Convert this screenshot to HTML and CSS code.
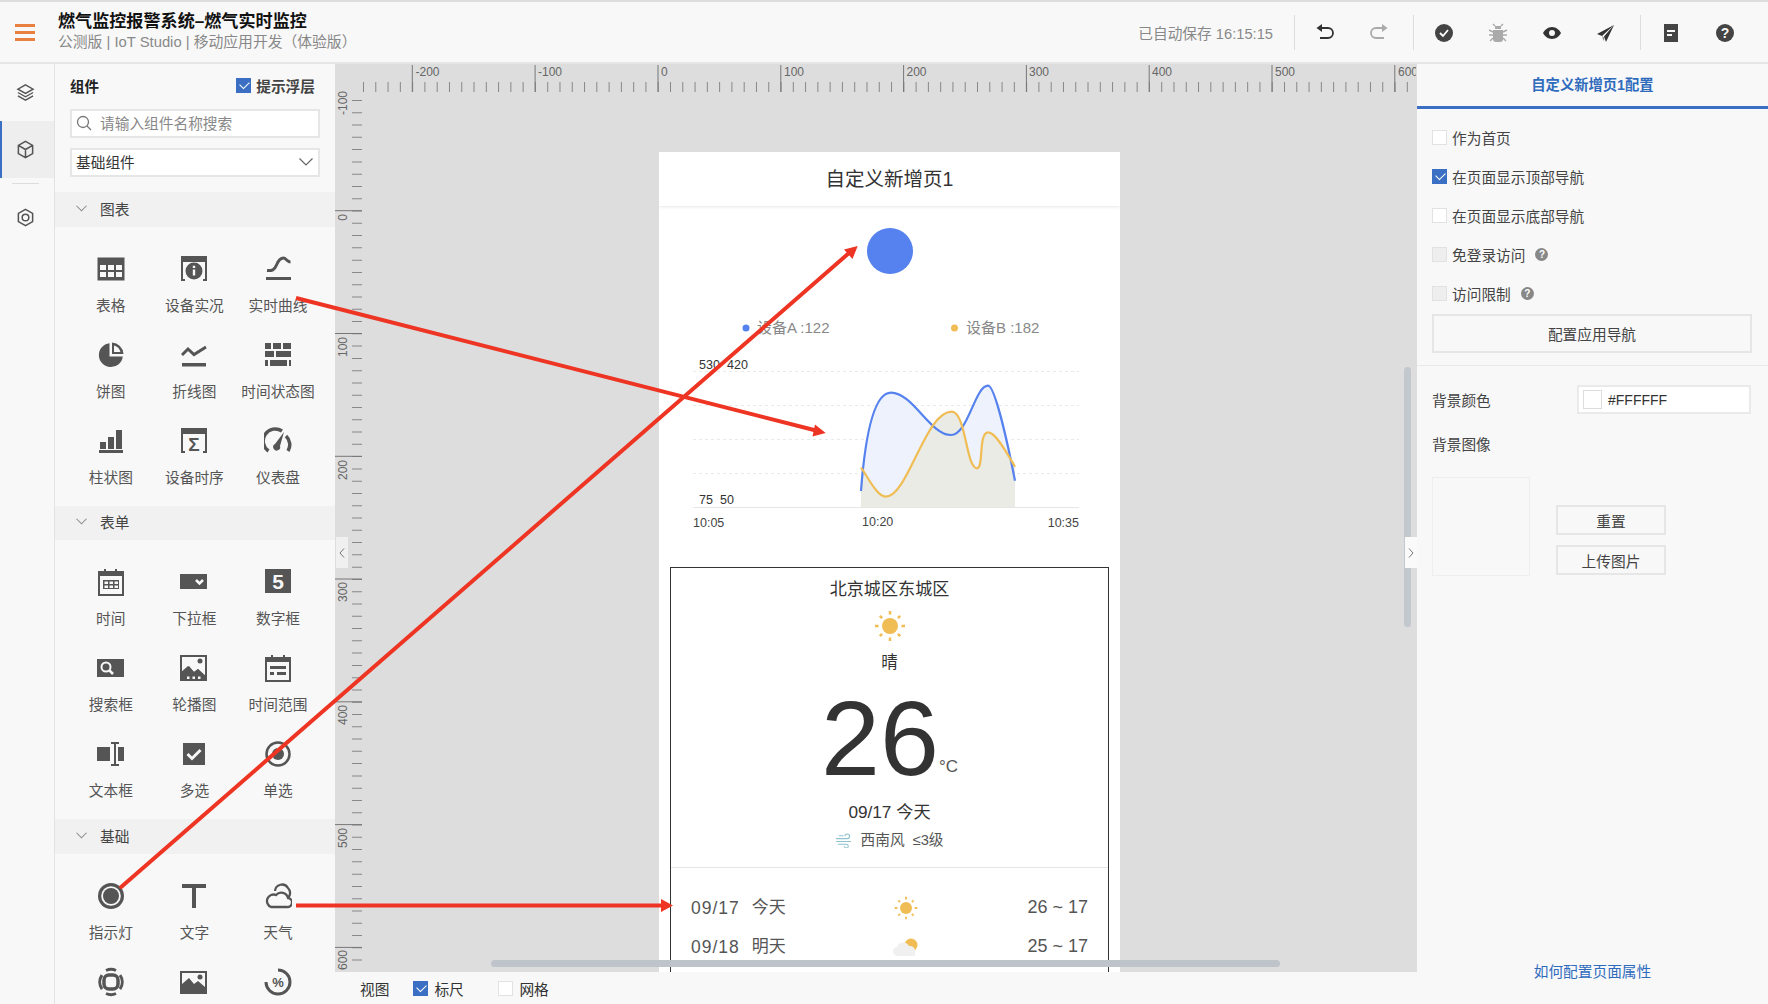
FILE: index.html
```html
<!DOCTYPE html>
<html lang="zh">
<head>
<meta charset="utf-8">
<title>燃气实时监控</title>
<link rel="stylesheet" href="styles.css">
</head>
<body>
<svg class="defs" aria-hidden="true">
  <symbol id="i-table" viewBox="0 0 28 28"><path d="M.5 2.5h27v23H.5z"/><path fill="#f8f8f8" d="M3 10h6v5H3zM11 10h6v5h-6zM19 10h6v5h-6zM3 17h6v5H3zM11 17h6v5h-6zM19 17h6v5h-6z"/></symbol>
  <symbol id="i-device" viewBox="0 0 28 28"><path d="M1 1h26v25h-4v-2h2V7H3v17h2v2H1z"/><circle cx="14" cy="16" r="8.5"/><path fill="#f8f8f8" d="M12.800 14.500h2.400v6h-2.400zM12.800 10.800h2.400v2.300h-2.400z"/></symbol>
  <symbol id="i-curve" viewBox="0 0 28 28"><path d="M2 22h25v3H2z"/><path fill="none" stroke="currentColor" stroke-width="3" d="M3 15.500C8 16 10.500 15 12.500 10 14.500 5 17 3 19.500 3 22 3 23 7 26.500 7"/></symbol>
  <symbol id="i-pie" viewBox="0 0 28 28"><path d="M12.500 2.200A12 12 0 1 0 25.800 15.500H12.500z"/><path d="M15 1.500A12.500 12.500 0 0 1 26.500 13H15z"/><path fill="#f8f8f8" d="M17 4.500A9 9 0 0 1 23.500 11H17z"/></symbol>
  <symbol id="i-line" viewBox="0 0 28 28"><path d="M2 22h24v3.500H2z"/><path fill="none" stroke="currentColor" stroke-width="3" d="M2 14l6-6 6 5.500L26 6"/></symbol>
  <symbol id="i-status" viewBox="0 0 28 28"><path d="M1 2h6v6H1zM9 2h8v6H9zM19 2h8v6h-8zM1 10h9v6H1zM12 10h15v6H12zM1 19h3v6H1zM6 19h17v6H6zM25 19h2v6h-2z"/></symbol>
  <symbol id="i-bar" viewBox="0 0 28 28"><path d="M2 23h24v3H2zM3 15h6v7H3zM11 10h6v12h-6zM19 3h6v19h-6z"/></symbol>
  <symbol id="i-seq" viewBox="0 0 28 28"><path d="M1 1h26v25h-4v-2h2V7H3v17h2v2H1z"/></symbol>
  <symbol id="i-gauge" viewBox="0 0 28 28"><path fill="none" stroke="currentColor" stroke-width="3.500" d="M4.500 24A12 12 0 0 1 18 4M22 9a12 12 0 0 1 2 15"/><path d="M11 17l9-12-4 14a3.500 3.500 0 1 1-5-2z"/></symbol>
  <symbol id="i-cal" viewBox="0 0 28 28"><path d="M7 1h2v3H7zM18 1h2v3h-2zM1 3h26v25H1z"/><path fill="#f8f8f8" d="M3 8h22v18H3z"/><path d="M1 6h26v2H1zM6 12h16v9H6z"/><path fill="#f8f8f8" d="M7.500 13.500h3.500v2.500H7.500zM12.500 13.500h3.500v2.500h-3.500zM17.500 13.500h3.500v2.500h-3.500zM7.500 17.500h3.500V20H7.500zM12.500 17.500h3.500V20h-3.500zM17.500 17.500h3.500V20h-3.500z"/></symbol>
  <symbol id="i-drop" viewBox="0 0 28 28"><path d="M0 6h27v15H0z"/><path fill="none" stroke="#f8f8f8" stroke-width="2.500" d="M16 12l3.500 3.500L23 12"/></symbol>
  <symbol id="i-num" viewBox="0 0 28 28"><path d="M1 1h26v24H1z"/></symbol>
  <symbol id="i-search" viewBox="0 0 28 28"><path d="M0 5h27v18H0z"/><circle cx="9" cy="13" r="4.500" fill="none" stroke="#f8f8f8" stroke-width="2"/><path stroke="#f8f8f8" stroke-width="2.500" d="M12 16l4 4"/></symbol>
  <symbol id="i-carousel" viewBox="0 0 28 28"><path d="M0 1h27v26H0z"/><path fill="#f8f8f8" d="M2 3h23v19l-7-7-4 3-5-6-7 7z"/><circle cx="20" cy="7" r="2.500"/><path d="M0 19l8-7 6 6 4-3 9 8v4H0z"/><path fill="#f8f8f8" d="M7 22.500h2.500V25H7zM12.500 22.500H15V25h-2.500zM18 22.500h2.500V25H18z"/></symbol>
  <symbol id="i-range" viewBox="0 0 28 28"><path d="M7 1h2v3H7zM19 1h2v3h-2zM1 3h26v25H1z"/><path fill="#f8f8f8" d="M3 8h22v18H3z"/><path d="M6 12h16v3H6zM6 18h4v3H6zM13 18h9v3h-9z"/></symbol>
  <symbol id="i-input" viewBox="0 0 28 28"><path d="M0 7h13v14H0zM21 7h6v14h-6zM14 2h8v2h-3v20h3v2h-8v-2h3V4h-3z"/></symbol>
  <symbol id="i-check" viewBox="0 0 28 28"><path d="M3 3h22v22H3z"/><path fill="none" stroke="#f8f8f8" stroke-width="3" d="M7.500 14l4.500 4.500 8.500-8.500"/></symbol>
  <symbol id="i-radio" viewBox="0 0 28 28"><circle cx="14" cy="14" r="11.500" fill="none" stroke="currentColor" stroke-width="2.500"/><circle cx="14" cy="14" r="6"/></symbol>
  <symbol id="i-lamp" viewBox="0 0 28 28"><circle cx="14" cy="14" r="13"/><circle cx="14" cy="14" r="9.800" fill="#f8f8f8"/><circle cx="14" cy="14" r="8"/></symbol>
  <symbol id="i-text" viewBox="0 0 28 28"><path d="M2 2h24v4H16v20h-4V6H2z"/></symbol>
  <symbol id="i-cloud" viewBox="0 0 28 28"><path fill="none" stroke="currentColor" stroke-width="2.300" d="M7 25h16a4.500 4.500 0 0 0 1-9 7 7 0 0 0-12-3 6 6 0 0 0-5 12zM11 9a7 7 0 0 1 13-3 7 7 0 0 1 0 10"/></symbol>
  <symbol id="i-ring" viewBox="0 0 28 28"><path fill="none" stroke="currentColor" stroke-width="3" d="M5 7A12 12 0 0 0 5 21M9 25.500a12 12 0 0 0 10 0M23 21A12 12 0 0 0 23 7M19 2.500a12 12 0 0 0-10 0"/><rect x="7" y="7" width="14" height="14" rx="5" fill="none" stroke="currentColor" stroke-width="3.500"/></symbol>
  <symbol id="i-image" viewBox="0 0 28 28"><path d="M0 3h27v23H0z"/><path fill="#f8f8f8" d="M2 5h23v14l-7-6-4 3-5-6-7 6z"/><circle cx="20" cy="9" r="2.500"/></symbol>
  <symbol id="i-percent" viewBox="0 0 28 28"><path fill="none" stroke="currentColor" stroke-width="3" d="M14 2a12 12 0 1 1-12 12"/></symbol>
  <symbol id="i-sun" viewBox="0 0 32 32"><circle cx="16" cy="16" r="8"/><path fill="none" stroke="currentColor" stroke-width="2.500" d="M16 1v3.500M16 27.500V31M1 16h3.500M27.500 16H31M5.800 5.800l2.300 2.300M23.900 23.900l2.300 2.300M5.800 26.200l2.300-2.300M23.900 8.100l2.300-2.300"/></symbol>
</svg>

<div class="app">
  <header class="topbar">
    <div class="burger"><i></i><i></i><i></i></div>
    <div class="brand">
      <div class="brand-title">燃气监控报警系统–燃气实时监控</div>
      <div class="brand-sub">公测版 | IoT Studio | 移动应用开发（体验版）</div>
    </div>
    <div class="tools">
      <span class="saved">已自动保存 16:15:15</span>
      <span class="sep"></span>
      <span class="tool"><svg viewBox="0 0 20 20" width="20" height="20"><path fill="none" stroke="#333" stroke-width="1.800" d="M6 5h7a5 5 0 0 1 0 10H5"/><path fill="#333" d="M7 1v8L1.500 5z"/></svg></span>
      <span class="tool"><svg viewBox="0 0 20 20" width="20" height="20"><path fill="none" stroke="#aaa" stroke-width="1.800" d="M14 5H7a5 5 0 0 0 0 10h8"/><path fill="#aaa" d="M13 1v8l5.500-4z"/></svg></span>
      <span class="sep"></span>
      <span class="tool"><svg viewBox="0 0 20 20" width="20" height="20"><circle cx="10" cy="10" r="9" fill="#444"/><path fill="none" stroke="#fff" stroke-width="1.800" d="M6 10l3 3 5-6"/></svg></span>
      <span class="tool"><svg viewBox="0 0 20 20" width="20" height="20"><path fill="#aaa" d="M7 3h6v3H7zM5 7h10v10a3 3 0 0 1-3 2H8a3 3 0 0 1-3-2z"/><path fill="none" stroke="#aaa" stroke-width="1.400" d="M1 7l4 2M19 7l-4 2M1 12h4M19 12h-4M2 18l3-3M18 18l-3-3M7 3L5 1M13 3l2-2"/></svg></span>
      <span class="tool"><svg viewBox="0 0 20 20" width="20" height="20"><path fill="#333" d="M10 4c4 0 7.500 3 9 6-1.500 3-5 6-9 6s-7.500-3-9-6c1.500-3 5-6 9-6z"/><circle cx="10" cy="10" r="3" fill="#f8f8f8"/></svg></span>
      <span class="tool"><svg viewBox="0 0 20 20" width="20" height="20"><path fill="#333" d="M18 2L1 11l5 2zM18 2L8 13.500l2 5.500z"/><path fill="#888" d="M6 13l1.500 5 1-3z"/></svg></span>
      <span class="sep"></span>
      <span class="tool"><svg viewBox="0 0 20 20" width="20" height="20"><path fill="#444" d="M3 1h14v18H3z"/><path fill="#f8f8f8" d="M6 7h8v2H6zM6 11h5v2H6z"/></svg></span>
      <span class="tool"><svg viewBox="0 0 20 20" width="20" height="20"><circle cx="10" cy="10" r="9" fill="#444"/><text x="10" y="15" text-anchor="middle" class="glyph glyph-help">?</text></svg></span>
    </div>
  </header>

  <div class="main">
    <nav class="rail">
      <div class="rail-item"><svg viewBox="0 0 20 20" width="19" height="19" fill="none" stroke="#555" stroke-width="1.500"><path d="M10 2l8 4.500-8 4.500-8-4.500zM2 10l8 4.500 8-4.500M2 13.500L10 18l8-4.500"/></svg></div>
      <div class="rail-item rail-active"><svg viewBox="0 0 20 20" width="19" height="19" fill="none" stroke="#555" stroke-width="1.600"><path d="M10 1.500l7.500 4.200v8.600L10 18.500l-7.500-4.200V5.700zM2.500 5.700l7.500 4.300 7.500-4.300M10 10v8.500"/></svg></div>
      <div class="rail-line"></div>
      <div class="rail-item"><svg viewBox="0 0 20 20" width="19" height="19" fill="none" stroke="#555" stroke-width="1.600"><path d="M10 1.500l7.500 4.200v8.600L10 18.500l-7.500-4.200V5.700z"/><circle cx="10" cy="10" r="3.500"/></svg></div>
    </nav>

    <aside class="panel">
      <div class="panel-head">
        <strong class="panel-title">组件</strong>
        <label class="hint"><span class="cb cb-on"></span>提示浮层</label>
      </div>
      <div class="search">
        <svg viewBox="0 0 16 16" width="16" height="16" fill="none" stroke="#777" stroke-width="1.300"><circle cx="7" cy="7" r="5.500"/><path d="M11 11l4 4"/></svg>
        <span>请输入组件名称搜索</span>
      </div>
      <div class="select">
        <span>基础组件</span>
        <svg viewBox="0 0 14 8" width="14" height="8" fill="none" stroke="#666" stroke-width="1.200"><path d="M0.500 0.500L7 7l6.500-6.500"/></svg>
      </div>

      <div class="sec"><svg viewBox="0 0 12 7" width="11" height="7" fill="none" stroke="#888" stroke-width="1.100"><path d="M.5.500L6 6 11.500.500"/></svg>图表</div>
      <div class="grid">
        <div class="cell"><svg class="ico"><use href="#i-table"/></svg><span>表格</span></div>
        <div class="cell"><svg class="ico"><use href="#i-device"/></svg><span>设备实况</span></div>
        <div class="cell"><svg class="ico"><use href="#i-curve"/></svg><span>实时曲线</span></div>
        <div class="cell"><svg class="ico"><use href="#i-pie"/></svg><span>饼图</span></div>
        <div class="cell"><svg class="ico"><use href="#i-line"/></svg><span>折线图</span></div>
        <div class="cell"><svg class="ico"><use href="#i-status"/></svg><span>时间状态图</span></div>
        <div class="cell"><svg class="ico"><use href="#i-bar"/></svg><span>柱状图</span></div>
        <div class="cell"><svg class="ico" viewBox="0 -2 28 32"><use href="#i-seq" width="28" height="28"/><text x="14" y="24" text-anchor="middle" class="glyph glyph-sigma">Σ</text></svg><span>设备时序</span></div>
        <div class="cell"><svg class="ico"><use href="#i-gauge"/></svg><span>仪表盘</span></div>
      </div>

      <div class="sec"><svg viewBox="0 0 12 7" width="11" height="7" fill="none" stroke="#888" stroke-width="1.100"><path d="M.5.500L6 6 11.500.500"/></svg>表单</div>
      <div class="grid">
        <div class="cell"><svg class="ico"><use href="#i-cal"/></svg><span>时间</span></div>
        <div class="cell"><svg class="ico"><use href="#i-drop"/></svg><span>下拉框</span></div>
        <div class="cell"><svg class="ico" viewBox="0 -2 28 32"><use href="#i-num" width="28" height="28"/><text x="14" y="21" text-anchor="middle" class="glyph glyph-five">5</text></svg><span>数字框</span></div>
        <div class="cell"><svg class="ico"><use href="#i-search"/></svg><span>搜索框</span></div>
        <div class="cell"><svg class="ico"><use href="#i-carousel"/></svg><span>轮播图</span></div>
        <div class="cell"><svg class="ico"><use href="#i-range"/></svg><span>时间范围</span></div>
        <div class="cell"><svg class="ico"><use href="#i-input"/></svg><span>文本框</span></div>
        <div class="cell"><svg class="ico"><use href="#i-check"/></svg><span>多选</span></div>
        <div class="cell"><svg class="ico"><use href="#i-radio"/></svg><span>单选</span></div>
      </div>

      <div class="sec"><svg viewBox="0 0 12 7" width="11" height="7" fill="none" stroke="#888" stroke-width="1.100"><path d="M.5.500L6 6 11.500.500"/></svg>基础</div>
      <div class="grid">
        <div class="cell"><svg class="ico"><use href="#i-lamp"/></svg><span>指示灯</span></div>
        <div class="cell"><svg class="ico"><use href="#i-text"/></svg><span>文字</span></div>
        <div class="cell"><svg class="ico"><use href="#i-cloud"/></svg><span>天气</span></div>
        <div class="cell"><svg class="ico"><use href="#i-ring"/></svg></div>
        <div class="cell"><svg class="ico"><use href="#i-image"/></svg></div>
        <div class="cell"><svg class="ico" viewBox="0 -2 28 32"><use href="#i-percent" width="28" height="28"/><text x="14" y="19" text-anchor="middle" class="glyph glyph-pct">%</text></svg></div>
      </div>
    </aside>

    <section class="center">
      <div class="canvas">
        <div class="phone">
          <div class="phone-head">自定义新增页1</div>
          <div class="lamp"></div>
          <svg class="chart" viewBox="659 300 461 240" width="461" height="240">
            <circle cx="746" cy="328" r="3.500" fill="#5582ee"/>
            <text x="757" y="333" class="legend">设备A :122</text>
            <circle cx="954.500" cy="328" r="3.500" fill="#f0bd55"/>
            <text x="966" y="333" class="legend">设备B :182</text>
            <text x="699" y="369" class="axis">530</text>
            <text x="727" y="369" class="axis">420</text>
            <text x="699" y="504" class="axis">75</text>
            <text x="720" y="504" class="axis">50</text>
            <g class="gridline">
              <path d="M693 371.500H1079M693 405.500H1079M693 439.500H1079M693 473.500H1079"/>
            </g>
            <path d="M693 507.500H1079" stroke="#e6e6e6"/>
            <path d="M861 491C866 425 876 392.700 891 392.700 913 392.700 930 435 951 435 968 435 975 385.700 988 385.700 995 385.700 1008 445 1015 480.700V507H861z" fill="#edf2fd"/>
            <path d="M861 467.700C868 477 877 496.700 885.700 496.700 908 496.700 925 411.700 951.700 411.700 966 411.700 966 468.300 977 468.300 984 468.300 978 432.300 988.300 432.300 996 432.300 1008 455 1015 466.700V507H861z" fill="#eaebe5"/>
            <path d="M861 491C866 425 876 392.700 891 392.700 913 392.700 930 435 951 435 968 435 975 385.700 988 385.700 995 385.700 1008 445 1015 480.700" fill="none" stroke="#5582ee" stroke-width="2.200"/>
            <path d="M861 467.700C868 477 877 496.700 885.700 496.700 908 496.700 925 411.700 951.700 411.700 966 411.700 966 468.300 977 468.300 984 468.300 978 432.300 988.300 432.300 996 432.300 1008 455 1015 466.700" fill="none" stroke="#f0bd55" stroke-width="2.200"/>
            <text x="693" y="527" class="tick">10:05</text>
            <text x="862" y="526" class="tick">10:20</text>
            <text x="1079" y="527" text-anchor="end" class="tick">10:35</text>
          </svg>
          <div class="weather">
            <div class="w-top">
              <div class="w-city">北京城区东城区</div>
              <svg class="w-sun"><use href="#i-sun"/></svg>
              <div class="w-desc">晴</div>
              <div class="w-temp">26<span class="w-unit">°C</span></div>
              <div class="w-date">09/17 今天</div>
              <div class="w-wind">
                <svg viewBox="0 0 18 16" width="17" height="15" fill="none" stroke="#8fc4cf" stroke-width="1.100"><path d="M0 6h12a2.500 2.500 0 1 0-2.500-2.500M0 9h16M3 3h5M2 12h9a2 2 0 1 1-2 2"/></svg>
                <span>西南风</span><span>≤3级</span>
              </div>
            </div>
            <div class="w-list">
              <div class="w-row">
                <span class="w-day"><span class="w-num">09/17</span><span>今天</span></span>
                <svg class="w-ico-sun"><use href="#i-sun"/></svg>
                <span class="w-range">26 ~ 17</span>
              </div>
              <div class="w-row">
                <span class="w-day"><span class="w-num">09/18</span><span>明天</span></span>
                <svg viewBox="0 0 26 18" width="26" height="18"><circle cx="18" cy="7" r="6.500" fill="#f0bd55"/><path d="M5 18a4.500 4.500 0 0 1-1-9 6.500 6.500 0 0 1 12-1 5 5 0 0 1 6 5v5z" fill="#f0f0f0"/></svg>
                <span class="w-range">25 ~ 17</span>
              </div>
            </div>
          </div>
        </div>

        <svg class="ruler" viewBox="336 64 1081 908" width="1081" height="908">
          <rect x="336" y="64" width="1081" height="30" fill="#ddd"/>
          <path class="r-minor" d="M364 87H1417"/>
          <path class="r-major" d="M413.300 65V92M536.100 65V92M659 65V92M781.800 65V92M904.600 65V92M1027.400 65V92M1150.200 65V92M1273 65V92M1395.800 65V92"/>
          <g class="r-label">
            <text x="416.500" y="76">-200</text><text x="539" y="76">-100</text><text x="662" y="76">0</text><text x="785" y="76">100</text><text x="907.500" y="76">200</text><text x="1030" y="76">300</text><text x="1153" y="76">400</text><text x="1276" y="76">500</text><text x="1399" y="76">600</text>
          </g>
          <path class="r-minor" d="M358 100V972"/>
          <path class="r-major" d="M336 210.700H363M336 333.500H363M336 456.300H363M336 579H363M336 701.800H363M336 824.600H363M336 947.400H363"/>
          <g class="r-label">
            <text transform="translate(348 91) rotate(-90)" text-anchor="end">-100</text>
            <text transform="translate(348 214) rotate(-90)" text-anchor="end">0</text>
            <text transform="translate(348 337) rotate(-90)" text-anchor="end">100</text>
            <text transform="translate(348 460) rotate(-90)" text-anchor="end">200</text>
            <text transform="translate(348 582) rotate(-90)" text-anchor="end">300</text>
            <text transform="translate(348 705) rotate(-90)" text-anchor="end">400</text>
            <text transform="translate(348 828) rotate(-90)" text-anchor="end">500</text>
            <text transform="translate(348 950) rotate(-90)" text-anchor="end">600</text>
          </g>
        </svg>

        <div class="bar-v"></div>
        <div class="bar-h"></div>
        <div class="handle handle-l"><svg viewBox="0 0 6 10" width="6" height="10" fill="none" stroke="#777"><path d="M5 .5L1 5l4 4.500"/></svg></div>
        <div class="handle handle-r"><svg viewBox="0 0 6 10" width="6" height="10" fill="none" stroke="#777"><path d="M1 .5L5 5 1 9.500"/></svg></div>
      </div>
      <div class="viewbar">
        <span class="vb-label">视图</span>
        <label class="vb-opt"><span class="cb cb-on"></span>标尺</label>
        <label class="vb-opt"><span class="cb"></span>网格</label>
      </div>
    </section>

    <aside class="props">
      <div class="props-tab">自定义新增页1配置</div>
      <div class="props-top">
        <label class="opt"><span class="cb"></span>作为首页</label>
        <label class="opt"><span class="cb cb-on"></span>在页面显示顶部导航</label>
        <label class="opt"><span class="cb"></span>在页面显示底部导航</label>
        <label class="opt"><span class="cb cb-off"></span>免登录访问<span class="q">?</span></label>
        <label class="opt"><span class="cb cb-off"></span>访问限制<span class="q">?</span></label>
        <div class="btn btn-wide">配置应用导航</div>
      </div>
      <div class="props-bg">
        <div class="field">
          <span>背景颜色</span>
          <div class="color"><i></i>#FFFFFF</div>
        </div>
        <div class="field-label">背景图像</div>
        <div class="upload">
          <div class="preview"></div>
          <div class="upload-btns">
            <div class="btn">重置</div>
            <div class="btn">上传图片</div>
          </div>
        </div>
      </div>
      <a class="help-link">如何配置页面属性</a>
    </aside>
  </div>
</div>

<svg class="arrows" viewBox="0 0 1768 1004" width="1768" height="1004" aria-hidden="true">
  <path d="M296 298L816 430.500M120 888L849 253M296 905.500H662" stroke="#ee3524" stroke-width="4" fill="none"/>
  <path d="M825.700 433L812.500 436.500 815 424.500zM857.700 246L852.500 259 844 249.500zM673 905.500L661 899V912z" fill="#ee3524"/>
</svg>
</body>
</html>
```

FILE: styles.css
```css
* { box-sizing: border-box; }
html, body { margin: 0; padding: 0; }
body {
  width: 1768px;
  height: 1004px;
  overflow: hidden;
  position: relative;
  font-family: "Liberation Sans", "Noto Sans CJK SC", sans-serif;
  font-size: 14.7px;
  color: #444;
  background: #f8f8f8;
}
.defs { position: absolute; width: 0; height: 0; overflow: hidden; }
.glyph { font-family: "Liberation Sans", sans-serif; font-weight: 700; }
.glyph-sigma { font-size: 19px; fill: #555; }
.glyph-five { font-size: 21px; fill: #f8f8f8; }
.glyph-pct { font-size: 13px; fill: #555; }
.glyph-help { font-size: 14px; fill: #f8f8f8; }

.app { display: flex; flex-direction: column; height: 1004px; }

.topbar {
  height: 64px;
  flex: none;
  display: flex;
  align-items: center;
  border-top: 2px solid #ddd;
  border-bottom: 2px solid #e6e6e6;
  background: #f8f8f8;
}
.burger { width: 58px; padding-left: 15px; display: flex; flex-direction: column; gap: 4px; }
.burger i { display: block; width: 20px; height: 3px; background: #e8803f; }
.brand { margin-top: -2px; }
.brand-title { font-size: 17.1px; line-height: 21px; color: #111; font-weight: 700; }
.brand-sub { font-size: 14.8px; line-height: 20px; color: #888; }
.tools { margin-left: auto; display: flex; align-items: center; height: 35px; margin-right: 16px; padding-top: 1px; }
.saved { font-size: 14.7px; color: #888; margin-right: 14px; }
.sep { width: 1px; height: 35px; background: #ddd; margin: 0 3px 0 7px; }
.tool { width: 54px; display: flex; justify-content: center; }

.main { flex: 1; display: flex; min-height: 0; }

.rail { width: 55px; flex: none; border-right: 1px solid #e3e3e3; }
.rail-item { height: 57px; display: flex; align-items: center; justify-content: center; border-left: 2px solid transparent; padding-right: 5px; }
.rail-active { background: #eee; border-left-color: #3a6fc4; }
.rail-line { width: 27px; height: 1px; background: #ddd; margin: 5px 0 5px 12px; }
.rail-item:last-child { height: 56px; }

.panel { width: 280px; flex: none; overflow: hidden; }
.panel-head { height: 45px; display: flex; align-items: center; justify-content: space-between; padding: 0 20px 2px 15px; }
.panel-title { color: #222; font-size: 14.5px; }
.hint { display: flex; align-items: center; color: #444; font-weight: 700; font-size: 14.7px; }
.hint .cb { margin-right: 5px; }
.search, .select {
  margin-left: 15px;
  width: 250px;
  height: 29px;
  background: #fff;
  border: 2px solid #e6e6e6;
  display: flex;
  align-items: center;
}
.search { padding: 0 0 3px 4px; color: #888; }
.search svg { margin-top: 2px; }
.search span { margin-left: 8px; }
.select { margin-top: 10px; padding: 0 5px 3px 4px; justify-content: space-between; color: #333; }
.select svg { margin-top: 2px; }
.sec {
  margin-top: 15px;
  height: 34.5px;
  background: #f1f1f1;
  display: flex;
  align-items: center;
  padding: 0 0 2px 21px;
  gap: 13px;
  color: #444;
}
.grid + .sec { margin-top: 0; }
.grid {
  display: grid;
  grid-template-columns: repeat(3, 83.6px);
  padding: 12px 15px 9px 14px;
}
.cell { height: 86px; padding-top: 14px; display: flex; flex-direction: column; align-items: center; color: #555; }
.ico { width: 28px; height: 32px; fill: currentColor; display: block; }
.cell span { margin-top: 10px; line-height: 22px; white-space: nowrap; }

.cb {
  display: inline-block;
  width: 15px;
  height: 15px;
  flex: none;
  background: #fff;
  border: 1px solid #e2e2e2;
  position: relative;
}
.cb-on { background: #3a6fc4; border-color: #3a6fc4; }
.cb-on::after {
  content: "";
  position: absolute;
  left: 3px;
  top: 2px;
  width: 8px;
  height: 5px;
  border-left: 1.500px solid #fff;
  border-bottom: 1.500px solid #fff;
  transform: rotate(-45deg);
}
.cb-off { background: #eee; }

.center { flex: 1; min-width: 0; display: flex; flex-direction: column; }
.canvas { flex: 1; min-height: 0; position: relative; overflow: hidden; background: #ddd; padding: 88px 0 0 324px; }
.phone { width: 461px; height: 820px; background: #fff; overflow: hidden; }
.phone-head {
  height: 54px;
  line-height: 54px;
  text-align: center;
  font-size: 19.5px;
  color: #333;
  box-shadow: 0 1px 3px rgba(0,0,0,.1);
}
.lamp { width: 46px; height: 46px; border-radius: 50%; background: #5582ee; margin: 22px auto 0; }
.chart { display: block; margin-top: 26px; }
.legend { font-size: 15px; fill: #888; }
.axis { font-size: 12.5px; fill: #333; }
.tick { font-size: 12.5px; fill: #444; }
.gridline path { stroke: #e9e9e9; stroke-dasharray: 3 3; fill: none; }

.weather { margin: 27px 0 0 11px; width: 439px; height: 430px; border: 1px solid #333; }
.w-top { text-align: center; border-bottom: 1px solid #e6e6e6; padding: 10px 0 16px; height: 300px; }
.w-city { font-size: 17.1px; line-height: 24px; color: #333; }
.w-sun { display: block; width: 32px; height: 32px; margin: 8px auto 0; fill: #f0bd55; color: #f0bd55; }
.w-desc { font-size: 16.5px; line-height: 24px; margin-top: 8px; color: #333; }
.w-temp { font-size: 106px; line-height: 106px; height: 106px; margin-top: 11px; color: #333; }
.w-unit { font-size: 17px; line-height: 17px; color: #555; vertical-align: 3px; }
.w-date { font-size: 17.2px; line-height: 24px; margin-top: 9px; color: #333; }
.w-wind { font-size: 14.7px; line-height: 20px; margin-top: 6px; display: flex; justify-content: center; align-items: center; gap: 8px; color: #555; }
.w-list { padding: 20px 20px 0 20px; }
.w-row { height: 39px; display: grid; grid-template-columns: 194px 42px 1fr; align-items: center; justify-items: center; font-size: 18px; color: #555; }
.w-day { justify-self: start; display: flex; align-items: center; gap: 12px; font-size: 17px; line-height: 24px; }
.w-num { font-size: 17.5px; letter-spacing: 1px; }
.w-ico-sun { width: 24px; height: 24px; fill: #f0bd55; color: #f0bd55; }
.w-range { justify-self: end; }

.ruler { position: absolute; left: 0; top: 0; display: block; }
.r-minor { stroke: #888; stroke-width: 10; stroke-dasharray: 1 11.280; fill: none; }
.r-major { stroke: #777; stroke-width: 1; fill: none; }
.r-label { font-size: 12px; fill: #666; }

.bar-v { position: absolute; left: 1069px; top: 303px; width: 7px; height: 260px; background: #c3c7ce; border-radius: 4px; }
.bar-h { position: absolute; left: 156px; top: 896px; width: 789px; height: 7px; background: #bfc3ca; border-radius: 4px; }
.handle { position: absolute; top: 473px; width: 12px; height: 31px; background: #f0f0f0; display: flex; align-items: center; justify-content: center; }
.handle-l { left: 1px; }
.handle-r { right: 0; background: #fafafa; }

.viewbar { height: 32px; flex: none; display: flex; align-items: center; background: #f8f8f8; padding: 1px 0 0 25px; color: #333; }
.vb-label { margin-right: 24px; }
.vb-opt { display: flex; align-items: center; gap: 6px; width: 85px; }

.props { width: 351px; flex: none; display: flex; flex-direction: column; background: #f8f8f8; }
.props-tab {
  height: 45px;
  flex: none;
  line-height: 42px;
  text-align: center;
  font-weight: 700;
  font-size: 14.3px;
  color: #2f6bbd;
  border-bottom: 3px solid #3a6fc4;
}
.props-top { padding: 9px 17px 12px 15px; border-bottom: 1px solid #e9e9e9; }
.opt { height: 39px; display: flex; align-items: center; gap: 5px; color: #444; }
.q {
  width: 13px;
  height: 13px;
  border-radius: 50%;
  background: #888;
  color: #fff;
  font-size: 10px;
  font-weight: 700;
  line-height: 13px;
  text-align: center;
  margin-left: 5px;
}
.btn {
  height: 30px;
  width: 110px;
  background: #f8f8f8;
  border: 2px solid #e6e6e6;
  display: flex;
  align-items: center;
  justify-content: center;
  color: #444;
}
.btn-wide { width: 320px; height: 39px; margin-top: 1px; }
.props-bg { padding: 19px 17px 0 15px; }
.field { display: flex; align-items: center; justify-content: space-between; height: 29px; }
.color { width: 174px; height: 29px; background: #fff; border: 2px solid #eaeaea; display: flex; align-items: center; padding-left: 4px; gap: 6px; font-size: 14px; color: #333; }
.color i { display: block; width: 19px; height: 19px; background: #fff; border: 1px solid #ddd; }
.field-label { margin-top: 21px; line-height: 20px; }
.upload { display: flex; margin-top: 22px; }
.preview { width: 98px; height: 99px; background: #f8f8f8; border: 1px solid #eee; }
.upload-btns { margin: 28px 0 0 26px; display: flex; flex-direction: column; gap: 10px; }
.help-link { margin-top: auto; padding-bottom: 22px; line-height: 20px; text-align: center; color: #2f6bbd; }

.arrows { position: absolute; left: 0; top: 0; pointer-events: none; }
```
